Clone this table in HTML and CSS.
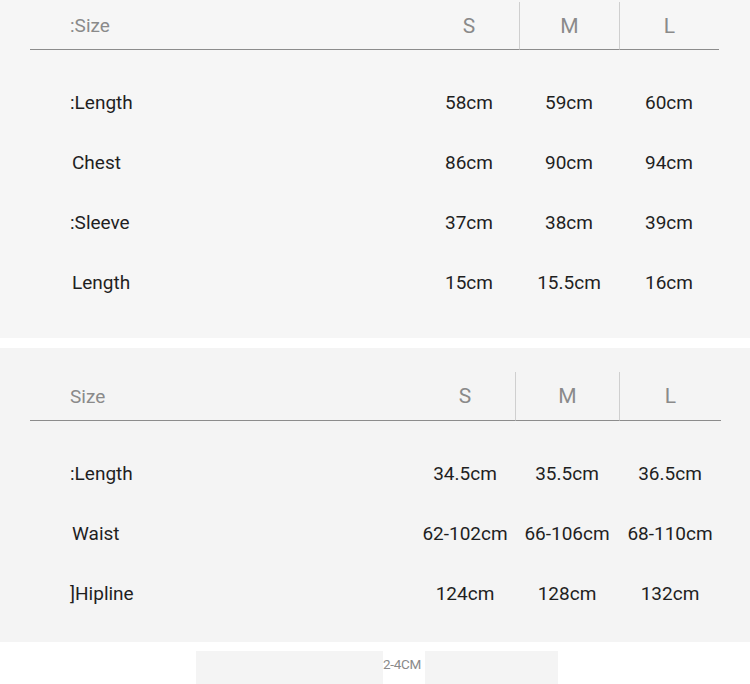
FILE: index.html
```html
<!DOCTYPE html>
<html>
<head>
<meta charset="utf-8">
<link rel="stylesheet" href="styles.css">
</head>
<body>
<section class="panel panel-top">
  <div class="table t1">
    <div class="head label">:Size</div>
    <div class="head size">S</div>
    <div class="head size div">M</div>
    <div class="head size div">L</div>

    <div class="cell label">:Length</div>
    <div class="cell val">58cm</div>
    <div class="cell val">59cm</div>
    <div class="cell val">60cm</div>

    <div class="cell label np">Chest</div>
    <div class="cell val">86cm</div>
    <div class="cell val">90cm</div>
    <div class="cell val">94cm</div>

    <div class="cell label">:Sleeve</div>
    <div class="cell val">37cm</div>
    <div class="cell val">38cm</div>
    <div class="cell val">39cm</div>

    <div class="cell label np">Length</div>
    <div class="cell val">15cm</div>
    <div class="cell val">15.5cm</div>
    <div class="cell val">16cm</div>
  </div>
</section>
<section class="panel panel-bottom">
  <div class="table t2">
    <div class="head label">Size</div>
    <div class="head size">S</div>
    <div class="head size div">M</div>
    <div class="head size div">L</div>

    <div class="cell label">:Length</div>
    <div class="cell val">34.5cm</div>
    <div class="cell val">35.5cm</div>
    <div class="cell val">36.5cm</div>

    <div class="cell label np">Waist</div>
    <div class="cell val">62-102cm</div>
    <div class="cell val">66-106cm</div>
    <div class="cell val">68-110cm</div>

    <div class="cell label">]Hipline</div>
    <div class="cell val">124cm</div>
    <div class="cell val">128cm</div>
    <div class="cell val">132cm</div>
  </div>
</section>
<div class="strip">
  <div class="strip-left"></div>
  <div class="strip-note">2-4CM</div>
  <div class="strip-right"></div>
</div>
</body>
</html>
```

FILE: styles.css
```css
html, body {
  margin: 0;
  padding: 0;
  background: #ffffff;
}
body {
  width: 750px;
  height: 684px;
  overflow: hidden;
  font-family: Roboto, "Noto Sans", sans-serif;
}
.panel {
  box-sizing: border-box;
}
.panel-top {
  height: 338px;
  background: #f6f6f6;
  padding: 2px 0 0 30px;
}
.panel-bottom {
  margin-top: 10px;
  height: 294px;
  background: #f4f4f4;
  padding: 24px 0 0 30px;
}
.table {
  display: grid;
  grid-auto-rows: 60px;
}
.t1 {
  grid-template-columns: 389px 100px 100px 100px;
  grid-template-rows: 70px;
}
.t2 {
  grid-template-columns: 385px 100px 104px 102px;
  grid-template-rows: 71px;
}
.head {
  display: flex;
  align-items: center;
  border-bottom: 1.5px solid #8c8c8c;
  color: #8a8a8a;
  font-size: 21px;
  margin-bottom: 22px;
}
.head.label {
  padding-left: 40px;
  font-size: 19px;
}
.head.size {
  justify-content: center;
}
.head.div {
  border-left: 1px solid #cfcfcf;
}
.cell {
  display: flex;
  align-items: center;
  color: #1f1f1f;
  font-size: 19px;
}
.cell.label {
  padding-left: 40px;
}
.cell.label.np {
  padding-left: 42px;
}
.cell.val {
  justify-content: center;
}
.strip {
  margin-top: 9px;
  display: flex;
  height: 33px;
  padding-left: 196px;
}
.strip-left {
  width: 187px;
  background: #f4f4f4;
}
.strip-note {
  width: 42px;
  white-space: nowrap;
  color: #8a8a8a;
  font-size: 13.5px;
  letter-spacing: -0.3px;
  line-height: 26px;
}
.strip-right {
  width: 133px;
  background: #f4f4f4;
}
```
